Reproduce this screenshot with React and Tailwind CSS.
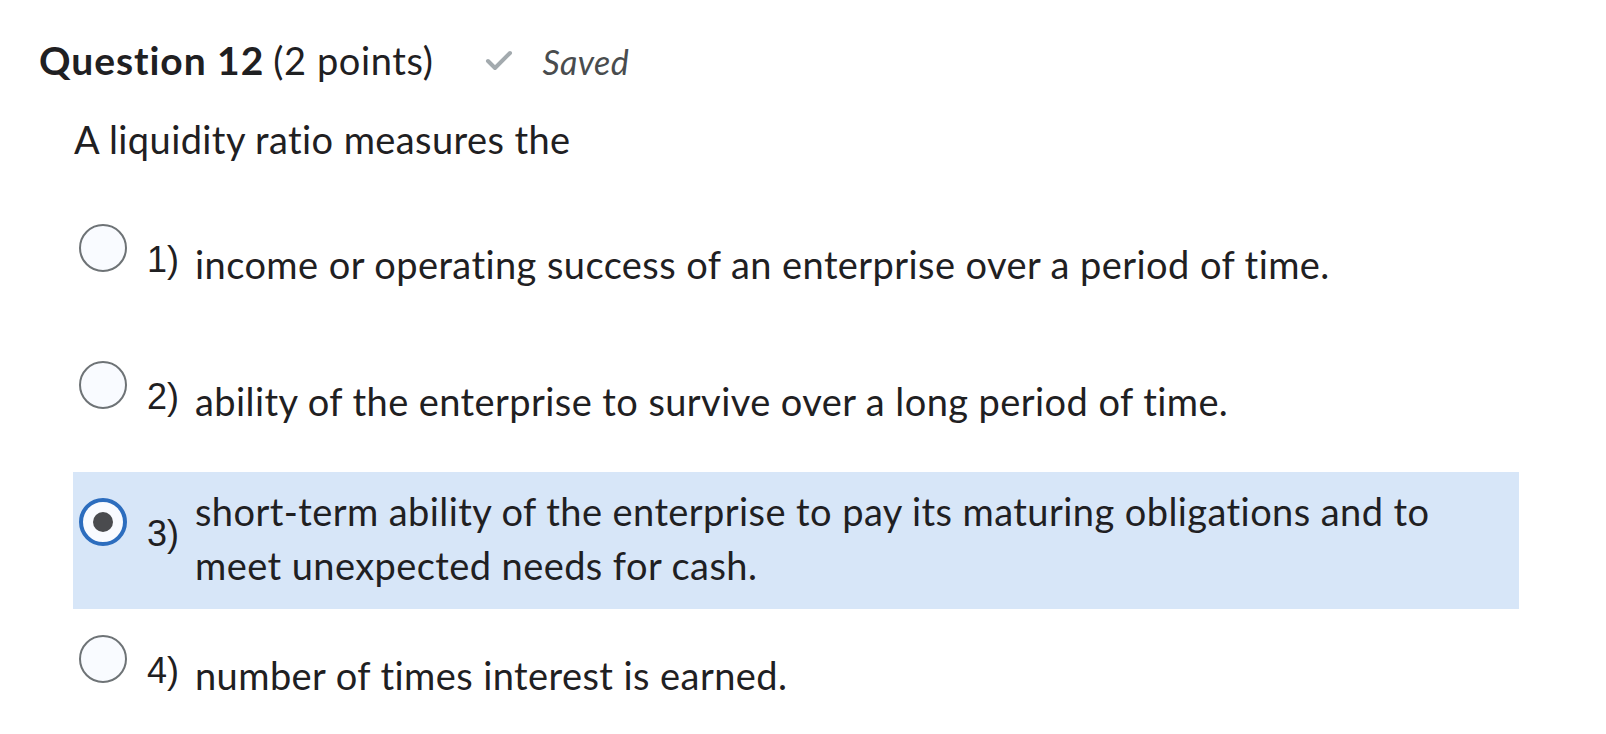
import React from "react";

const options = [
  { n: "1)", text: "income or operating success of an enterprise over a period of time." },
  { n: "2)", text: "ability of the enterprise to survive over a long period of time." },
  { n: "3)", text: "short-term ability of the enterprise to pay its maturing obligations and to meet unexpected needs for cash.", selected: true },
  { n: "4)", text: "number of times interest is earned." },
];

function Radio({ selected }) {
  if (selected) {
    return (
      <div className="mt-[26px] ml-[6px] w-[48px] h-[48px] shrink-0 rounded-full border-[4px] border-[#2c6dbe] bg-[#f9fbff] flex items-center justify-center">
        <div className="w-[20px] h-[20px] rounded-full bg-[#4a4b4e]" />
      </div>
    );
  }
  return (
    <div className="mt-[26px] ml-[6px] w-[48px] h-[48px] shrink-0 rounded-full border-2 border-[#6e7376] bg-[#f9fbff]" />
  );
}

export default function App() {
  return (
    <div className="w-[1606px] h-[734px] overflow-hidden bg-white text-[#1f2022] font-['Lato',sans-serif] [font-variant-ligatures:none]">
      <div className="pt-[38px] pl-[39px] flex items-baseline leading-[44px]">
        <span className="font-bold text-[39px] tracking-[0.95px]">Question 12</span>
        <span className="ml-[9px] text-[38px] tracking-[0.6px]">(2 points)</span>
        <svg className="ml-[52px] self-center" width="28" height="22" viewBox="0 0 28 22">
          <polyline points="3,11 10,18 25,3" fill="none" stroke="#a3aaae" strokeWidth="4" strokeLinecap="round" strokeLinejoin="round" />
        </svg>
        <span className="ml-[29px] italic text-[34px] tracking-[0.4px] text-[#494c4e]">Saved</span>
      </div>
      <div className="mt-[33px] pl-[74px] text-[38px] tracking-[0.4px] leading-[44px]">A liquidity ratio measures the</div>
      <div className="mt-[37px] ml-[73px] w-[1446px] flex flex-col">
        {options.map((o) => (
          <div key={o.n} className={`h-[137px] flex items-start ${o.selected ? "bg-[#d7e6f8]" : ""}`}>
            <Radio selected={o.selected} />
            <span className="ml-[20px] mt-[40px] w-[48px] shrink-0 font-['Liberation_Sans',sans-serif] text-[36px] leading-[44px]">{o.n}</span>
            <div className="self-center flex-1 mb-[5px] pr-[24px] text-[38px] tracking-[0.42px] leading-[54px]">{o.text}</div>
          </div>
        ))}
      </div>
    </div>
  );
}
